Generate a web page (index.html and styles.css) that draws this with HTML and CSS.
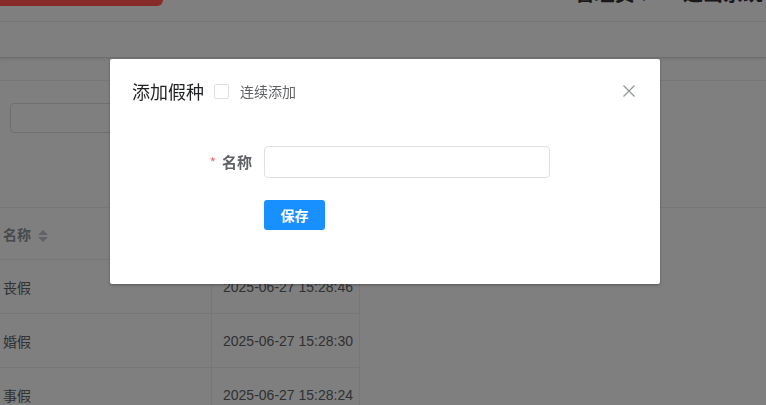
FILE: index.html
```html
<!DOCTYPE html>
<html lang="zh-CN">
<head>
  <meta charset="UTF-8">
  <meta name="viewport" content="width=device-width, initial-scale=1.0">
  <title>假种管理</title>
  <link rel="stylesheet" href="styles.css">
</head>
<body>

<!-- Navbar -->
<div class="navbar">
  <div class="logo-tab"></div>
  <div class="user-area">
    <span class="user-name">管理员 ▾</span>
    <span class="user-exit">退出系统</span>
  </div>
</div>

<!-- Tags view -->
<div class="tags-view"></div>

<!-- Main -->
<div class="app-main">
  <div class="search-bar">
    <input class="search-input" type="text">
  </div>
  <table class="data-table">
    <thead>
      <tr>
        <th class="col-name">名称 <span class="sort-caret"><i class="up"></i><i class="down"></i></span></th>
        <th class="col-time">创建时间</th>
      </tr>
    </thead>
    <tbody>
      <tr><td class="col-name">丧假</td><td class="col-time">2025-06-27 15:28:46</td></tr>
      <tr><td class="col-name">婚假</td><td class="col-time">2025-06-27 15:28:30</td></tr>
      <tr><td class="col-name">事假</td><td class="col-time">2025-06-27 15:28:24</td></tr>
    </tbody>
  </table>
</div>

<!-- Dialog -->
<div class="modal-mask"></div>
<div class="dialog-wrapper">
  <div class="dialog">
    <div class="dialog-header">
      <span class="dialog-title">添加假种</span>
      <label class="checkbox">
        <span class="checkbox-inner"></span>
        <span class="checkbox-label">连续添加</span>
      </label>
      <button class="dialog-close" type="button">
        <svg width="12" height="12" viewBox="0 0 12 12">
          <path d="M0.5 0.5 L11.5 11.5 M11.5 0.5 L0.5 11.5" stroke="#909399" stroke-width="1.2" fill="none"/>
        </svg>
      </button>
    </div>
    <div class="dialog-body">
      <div class="form-item">
        <label class="form-label"><span class="required">*</span>名称</label>
        <input class="form-input" type="text">
      </div>
      <div class="form-item">
        <span class="form-label"></span>
        <button class="btn-primary" type="button">保存</button>
      </div>
    </div>
  </div>
</div>

</body>
</html>
```

FILE: styles.css
```css
body {
  margin: 0;
  font-family: "Liberation Sans", Arial, "Noto Sans CJK SC", sans-serif;
  font-size: 14px;
  color: #606266;
  background-color: #fff;
  overflow: hidden;
}

.navbar {
  height: 21px;
  display: flex;
  justify-content: space-between;
  align-items: flex-start;
  border-bottom: 1px solid #f0f0f0;
  overflow: hidden;
}

.logo-tab {
  position: relative;
  z-index: 2001;
  width: 163px;
  height: 6px;
  background-color: #862a2a;
  border-radius: 0 0 8px 0;
}

.user-area {
  display: flex;
  gap: 34px;
  margin-top: -22px;
  margin-right: 3px;
  font-size: 20px;
  font-weight: bold;
  color: #303133;
  font-family: "Noto Sans CJK SC", sans-serif;
}

.tags-view {
  height: 35px;
  border-bottom: 1px solid #d8dce5;
  box-shadow: 0 1px 3px rgba(0, 0, 0, 0.12);
}

.app-main {
  margin-top: 22px;
  border-top: 1px solid #ebeef5;
}

.search-bar {
  padding: 22px 10px 0;
  height: 104px;
  border-bottom: 1px solid #ebeef5;
}

.search-input {
  width: 200px;
  height: 30px;
  box-sizing: border-box;
  border: 1px solid #dcdfe6;
  border-radius: 4px;
}

.data-table {
  width: 360px;
  border-collapse: collapse;
}

.data-table th,
.data-table td {
  height: 53px;
  padding: 0 10px 0 12px;
  text-align: left;
  white-space: nowrap;
  border-bottom: 1px solid #ebeef5;
  border-right: 1px solid #ebeef5;
}

.data-table th {
  height: 51px;
  color: #909399;
  font-weight: bold;
  font-family: "Noto Sans CJK SC", sans-serif;
}

.data-table .col-name {
  width: 203px;
  padding-left: 3px;
  padding-right: 5px;
  font-family: "Noto Sans CJK SC", sans-serif;
}

.data-table .col-time {
  padding-left: 11px;
  padding-right: 0;
}

.sort-caret {
  display: inline-flex;
  flex-direction: column;
  gap: 2px;
  margin-left: 4px;
  vertical-align: middle;
}

.sort-caret i {
  width: 0;
  height: 0;
  border-left: 5px solid transparent;
  border-right: 5px solid transparent;
}

.sort-caret .up {
  border-bottom: 5px solid #c0c4cc;
}

.sort-caret .down {
  border-top: 5px solid #c0c4cc;
}

/* dialog */
.modal-mask {
  position: fixed;
  top: 0;
  left: 0;
  right: 0;
  bottom: 0;
  background-color: rgba(0, 0, 0, 0.5);
  z-index: 2000;
}

.dialog-wrapper {
  position: fixed;
  top: 0;
  left: 0;
  right: 0;
  bottom: 0;
  z-index: 2002;
}

.dialog {
  position: relative;
  width: 550px;
  margin: 59px 0 0 110px;
  background-color: #fff;
  border-radius: 2px;
  box-shadow: 0 1px 3px rgba(0, 0, 0, 0.3);
  font-family: "Noto Sans CJK SC", sans-serif;
}

.dialog-header {
  display: flex;
  align-items: center;
  padding: 20px 22px 10px;
}

.dialog-title {
  font-size: 18px;
  line-height: 24px;
  color: #1f2022;
}

.checkbox {
  display: flex;
  align-items: center;
  margin-left: 10px;
  cursor: pointer;
}

.checkbox-inner {
  width: 15px;
  height: 15px;
  box-sizing: border-box;
  border: 1px solid #dcdfe6;
  border-radius: 2px;
}

.checkbox-label {
  margin-left: 11px;
  font-size: 14px;
  color: #606266;
}

.dialog-close {
  position: absolute;
  top: 26px;
  right: 25px;
  padding: 0;
  border: none;
  background: none;
  line-height: 0;
  cursor: pointer;
}

.dialog-body {
  padding: 33px 20px 32px;
}

.form-item {
  display: flex;
  align-items: center;
  margin-bottom: 22px;
}

.form-label {
  width: 134px;
  box-sizing: border-box;
  padding-right: 12px;
  text-align: right;
  font-weight: bold;
  font-size: 15px;
  line-height: 32px;
  color: #606266;
}

.required {
  margin-right: 6px;
  color: #f56c6c;
  font-size: 14px;
  font-weight: normal;
}

.form-input {
  width: 286px;
  height: 32px;
  box-sizing: border-box;
  border: 1px solid #dcdfe6;
  border-radius: 4px;
  outline: none;
}

.btn-primary {
  width: 61px;
  height: 30px;
  padding: 0;
  border: none;
  border-radius: 3px;
  background-color: #1890ff;
  color: #fff;
  font-size: 14px;
  font-weight: bold;
  font-family: "Noto Sans CJK SC", sans-serif;
  cursor: pointer;
}
```
